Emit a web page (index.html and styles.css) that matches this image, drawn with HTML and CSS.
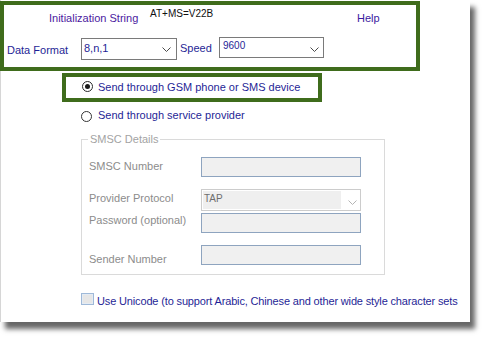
FILE: index.html
```html
<!DOCTYPE html>
<html>
<head>
<meta charset="utf-8">
<link rel="stylesheet" href="styles.css">
</head>
<body>
<div class="panel">
  <div class="topbox">
    <div class="row1">
      <span class="init">Initialization String</span>
      <span class="atms">AT+MS=V22B</span>
      <span class="help">Help</span>
    </div>
    <div class="row2">
      <span class="lbl-df">Data Format</span>
      <div class="dd dd1"><span class="ddtext">8,n,1</span>
        <svg class="chev" width="9" height="5" viewBox="0 0 9 5"><path d="M0.5 0.5 L4.5 4.5 L8.5 0.5" fill="none" stroke="#4a4a4a" stroke-width="1"/></svg>
      </div>
      <span class="lbl-speed">Speed</span>
      <div class="dd dd2"><span class="ddtext small">9600</span>
        <svg class="chev" width="9" height="5" viewBox="0 0 9 5"><path d="M0.5 0.5 L4.5 4.5 L8.5 0.5" fill="none" stroke="#4a4a4a" stroke-width="1"/></svg>
      </div>
    </div>
  </div>

  <div class="gsmbox">
    <span class="radio checked"><span class="dot"></span></span>
    <span class="rtext">Send through GSM phone or SMS device</span>
  </div>

  <div class="rrow">
    <span class="radio"></span>
    <span class="rtext">Send through service provider</span>
  </div>

  <fieldset class="smsc">
    <legend>SMSC Details</legend>
    <div class="frow r1">
      <span class="flbl l1">SMSC Number</span>
      <div class="inp"></div>
    </div>
    <div class="frow r2">
      <span class="flbl l2">Provider Protocol</span>
      <div class="psel">
        <span class="pinner">TAP</span>
        <svg class="pchev" width="9" height="5" viewBox="0 0 9 5"><path d="M0.5 0.5 L4.5 4.5 L8.5 0.5" fill="none" stroke="#b4b4b4" stroke-width="1"/></svg>
      </div>
    </div>
    <div class="frow r3">
      <span class="flbl l3">Password (optional)</span>
      <div class="inp"></div>
    </div>
    <div class="frow r4">
      <span class="flbl l4">Sender Number</span>
      <div class="inp"></div>
    </div>
  </fieldset>

  <div class="crow">
    <span class="cbox"></span>
    <span class="ctext">Use Unicode (to support Arabic, Chinese and other wide style character sets</span>
  </div>
</div>
</body>
</html>
```

FILE: styles.css
```css
html, body {
  margin: 0;
  padding: 0;
  background: #ffffff;
}
body {
  font-family: "Liberation Sans", Arial, sans-serif;
  font-size: 11px;
  line-height: 13px;
  color: #1f1f96;
  min-height: 338px;
}
.panel {
  width: 470px;
  height: 322px;
  background: #ffffff;
  box-shadow: inset 1px 0 0 #d6d6d6, 5px 7px 5px rgba(0, 0, 0, 0.6);
  overflow: hidden;
}
.topbox {
  box-sizing: border-box;
  margin-top: 1px;
  width: 420px;
  height: 70px;
  border: 4px solid #3f6c1c;
}
.row1 {
  display: flex;
  align-items: flex-start;
  height: 33px;
}
.init {
  margin-left: 45px;
  width: 101px;
  margin-top: 7px;
  color: #4b1aa0;
  white-space: nowrap;
}
.atms {
  width: 207px;
  margin-top: 3px;
  font-size: 10px;
  line-height: 12px;
  color: #111111;
}
.help {
  margin-top: 7px;
  color: #3a1aa0;
}
.row2 {
  display: flex;
  align-items: flex-start;
}
.lbl-df {
  margin-left: 3px;
  width: 74px;
  margin-top: 6px;
  white-space: nowrap;
}
.dd {
  box-sizing: border-box;
  border: 1px solid #7a7a7a;
  background: #ffffff;
  display: flex;
  align-items: flex-start;
  justify-content: space-between;
  color: #1f1f96;
}
.dd1 {
  width: 96px;
  height: 22px;
  padding: 3px 0 0 2px;
}
.dd2 {
  width: 105px;
  height: 21px;
  margin-top: -1px;
  padding: 2px 0 0 3px;
}
.ddtext.small {
  font-size: 10px;
  line-height: 12px;
  color: #1f1f96;
}
.chev {
  margin-right: 5px;
}
.dd1 .chev { margin-top: 5px; }
.dd2 .chev { margin-top: 7px; margin-right: 4px; }
.lbl-speed {
  margin-left: 3px;
  width: 39px;
  margin-top: 4px;
}

.gsmbox {
  box-sizing: border-box;
  margin-top: 2px;
  margin-left: 62px;
  width: 260px;
  height: 29px;
  border: 4px solid #3f6c1c;
  display: flex;
  align-items: center;
}
.radio {
  box-sizing: border-box;
  width: 11px;
  height: 11px;
  border: 1px solid #333333;
  border-radius: 50%;
  background: #ffffff;
  display: flex;
  align-items: center;
  justify-content: center;
  flex: none;
}
.radio.checked {
  border: 1.5px solid #2a2a2a;
  margin-top: -3px;
}
.dot {
  width: 5px;
  height: 5px;
  border-radius: 50%;
  background: #1a1a1a;
}
.gsmbox .radio {
  margin-left: 16px;
}
.rtext {
  margin-left: 5px;
  white-space: nowrap;
}
.rrow {
  display: flex;
  align-items: flex-start;
  margin-top: 7px;
  margin-left: 81px;
}
.rrow .radio {
  margin-top: 2px;
}
.rrow .rtext {
  margin-left: 6px;
}

.smsc {
  box-sizing: border-box;
  margin: 10px 0 0 81px;
  padding: 0 0 8px 0;
  width: 304px;
  border: 1px solid #dadada;
  min-inline-size: 0;
}
.smsc legend {
  margin-left: 6px;
  padding: 0 2px;
  line-height: 14px;
  color: #a3a3a3;
}
.frow {
  display: flex;
  align-items: flex-start;
}
.flbl {
  margin-left: 7px;
  width: 112px;
  color: #8c8c8c;
  white-space: nowrap;
}
.r1 { margin-top: 11px; }
.r2 { margin-top: 12px; }
.r3 { margin-top: 2px; }
.r4 { margin-top: 12px; }
.l1 { margin-top: 3px; }
.l2 { margin-top: 3px; }
.l3 { margin-top: 1px; }
.l4 { margin-top: 8px; }
.inp {
  box-sizing: border-box;
  width: 160px;
  height: 20px;
  border: 1px solid #8ea4bf;
  background: #f0f0f0;
}
.psel {
  box-sizing: border-box;
  width: 160px;
  height: 22px;
  border: 1px solid #cccccc;
  background: #ffffff;
  display: flex;
  align-items: flex-start;
  padding: 1px;
}
.pinner {
  box-sizing: border-box;
  width: 138px;
  height: 18px;
  background: #efefef;
  font-size: 10px;
  line-height: 12px;
  color: #6e6e6e;
  padding: 2px 0 0 1px;
}
.pchev {
  margin-left: 7px;
  margin-top: 9px;
}

.crow {
  display: flex;
  align-items: flex-start;
  margin-top: 18px;
  margin-left: 81px;
}
.cbox {
  box-sizing: border-box;
  width: 13px;
  height: 12px;
  border: 1px solid #9fb9d8;
  box-shadow: inset 0 0 0 1px #e4ebf3;
  background: #e6e6e6;
  flex: none;
}
.ctext {
  margin-left: 3px;
  margin-top: 2px;
  white-space: nowrap;
  letter-spacing: -0.15px;
}
```
